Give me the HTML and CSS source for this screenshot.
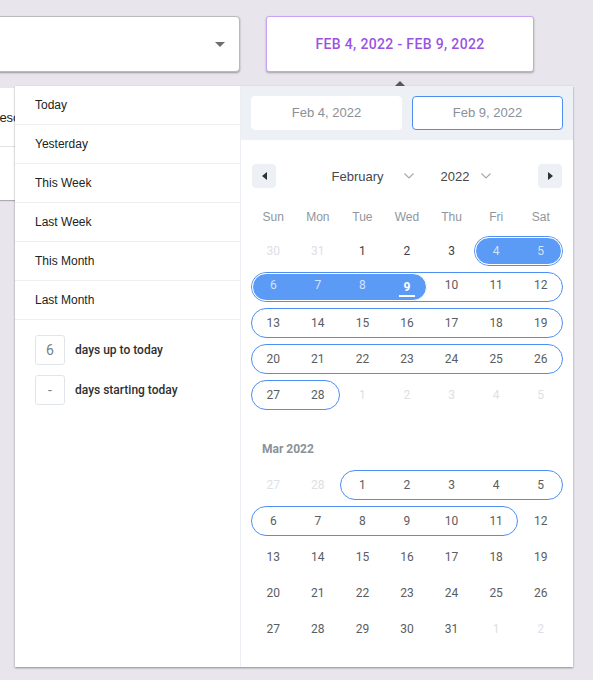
FILE: index.html
```html
<!DOCTYPE html>
<html>
<head>
<meta charset="utf-8">
<link rel="stylesheet" href="styles.css">
</head>
<body>
<div class="topbar">
  <div class="select"><span class="caret"></span></div>
  <button class="range-btn">FEB 4, 2022 - FEB 9, 2022</button>
</div>
<div class="card">
  <div class="card-row">Desc</div>
  <div class="card-row2"></div>
</div>
<div class="popup">
  <span class="popup-arrow"></span>
  <div class="presets">
    <div class="preset">Today</div>
    <div class="preset">Yesterday</div>
    <div class="preset">This Week</div>
    <div class="preset">Last Week</div>
    <div class="preset">This Month</div>
    <div class="preset">Last Month</div>
    <div class="custom">
      <div class="custom-row"><span class="num-box">6</span><span class="custom-label">days up to today</span></div>
      <div class="custom-row"><span class="num-box">-</span><span class="custom-label">days starting today</span></div>
    </div>
  </div>
  <div class="pane">
    <div class="inputs">
      <div class="date-input">Feb 4, 2022</div>
      <div class="date-input active">Feb 9, 2022</div>
    </div>
    <div class="cal">
      <div class="cal-head">
        <span class="nav-btn"><span class="tri-left"></span></span>
        <div class="cal-title">
          <span class="sel-month">February<svg class="chev" width="10" height="6" viewBox="0 0 10 6"><path d="M0.5 0.5 L5 5 L9.5 0.5" fill="none" stroke="#a3a8ad" stroke-width="1.1"/></svg></span>
          <span class="sel-year">2022<svg class="chev" width="10" height="6" viewBox="0 0 10 6"><path d="M0.5 0.5 L5 5 L9.5 0.5" fill="none" stroke="#a3a8ad" stroke-width="1.1"/></svg></span>
        </div>
        <span class="nav-btn"><span class="tri-right"></span></span>
      </div>
      <div class="weekdays"><span>Sun</span><span>Mon</span><span>Tue</span><span>Wed</span><span>Thu</span><span>Fri</span><span>Sat</span></div>

      <div class="week">
        <span class="ring c6-8"></span><span class="fill c6-8 f-both"></span>
        <div class="days"><span class="off">30</span><span class="off">31</span><span class="dk">1</span><span class="dk">2</span><span class="dk">3</span><span class="in">4</span><span class="in">5</span></div>
      </div>
      <div class="week">
        <span class="ring c1-8"></span><span class="fill c1-5 f-left"></span>
        <div class="days"><span class="in">6</span><span class="in">7</span><span class="in">8</span><span><b class="cur">9</b></span><span>10</span><span>11</span><span>12</span></div>
      </div>
      <div class="week">
        <span class="ring c1-8"></span>
        <div class="days"><span>13</span><span>14</span><span>15</span><span>16</span><span>17</span><span>18</span><span>19</span></div>
      </div>
      <div class="week">
        <span class="ring c1-8"></span>
        <div class="days"><span>20</span><span>21</span><span>22</span><span>23</span><span>24</span><span>25</span><span>26</span></div>
      </div>
      <div class="week">
        <span class="ring c1-3"></span>
        <div class="days"><span>27</span><span>28</span><span class="off">1</span><span class="off">2</span><span class="off">3</span><span class="off">4</span><span class="off">5</span></div>
      </div>

      <div class="month-label">Mar 2022</div>

      <div class="week">
        <span class="ring c3-8"></span>
        <div class="days"><span class="off">27</span><span class="off">28</span><span>1</span><span>2</span><span>3</span><span>4</span><span>5</span></div>
      </div>
      <div class="week">
        <span class="ring c1-7"></span>
        <div class="days"><span>6</span><span>7</span><span>8</span><span>9</span><span>10</span><span>11</span><span>12</span></div>
      </div>
      <div class="week">
        <div class="days"><span>13</span><span>14</span><span>15</span><span>16</span><span>17</span><span>18</span><span>19</span></div>
      </div>
      <div class="week">
        <div class="days"><span>20</span><span>21</span><span>22</span><span>23</span><span>24</span><span>25</span><span>26</span></div>
      </div>
      <div class="week">
        <div class="days"><span>27</span><span>28</span><span>29</span><span>30</span><span>31</span><span class="off">1</span><span class="off">2</span></div>
      </div>
    </div>
  </div>
</div>
</body>
</html>
```
FILE: styles.css
```css
* { box-sizing: border-box; }
html, body { margin: 0; padding: 0; }
body {
  background: #e8e6ec;
  width: 593px;
  height: 680px;
  overflow: hidden;
  font-family: "Liberation Sans", Arial, sans-serif;
  position: relative;
}

.topbar {
  display: flex;
  padding-top: 16px;
  height: 72px;
}
.select {
  margin-left: -20px;
  width: 260px;
  height: 56px;
  background: #fff;
  border: 1px solid #b9b9bd;
  border-radius: 4px;
  box-shadow: 0 1px 2px rgba(0,0,0,0.35);
  display: flex;
  align-items: center;
  justify-content: flex-end;
  padding-right: 14px;
}
.caret {
  width: 0; height: 0;
  border-left: 5px solid transparent;
  border-right: 5px solid transparent;
  border-top: 5px solid #6e6e72;
  margin-top: 1px;
}
.range-btn {
  margin-left: 26px;
  width: 268px;
  height: 56px;
  background: #fff;
  border: 1px solid #c8a3f3;
  border-radius: 3px;
  box-shadow: 0 1px 2px rgba(0,0,0,0.3);
  font-family: Roboto, "Liberation Sans", sans-serif;
  font-weight: 500;
  font-size: 14px;
  letter-spacing: 0.35px;
  color: #9b52e3;
  padding: 0;
}

.card {
  margin-top: 16px;
  margin-left: -30px;
  width: 300px;
  background: #fff;
  box-shadow: 0 1px 1px rgba(0,0,0,0.25);
}
.card-row {
  height: 59px;
  padding-left: 20px;
  line-height: 59px;
  font-size: 13px;
  color: #222;
  border-bottom: 1px solid #e2e2e6;
}
.card-row2 { height: 53px; }

.popup {
  position: absolute;
  left: 15px;
  top: 86px;
  width: 558px;
  display: flex;
  background: #fff;
  box-shadow: 0 1px 2px rgba(0,0,0,0.4);
}
.popup-arrow {
  position: absolute;
  top: -5px;
  left: 380px;
  width: 0; height: 0;
  border-left: 5px solid transparent;
  border-right: 5px solid transparent;
  border-bottom: 5px solid #55575b;
}

.presets {
  width: 226px;
  border-right: 1px solid #eceef3;
}
.preset {
  height: 39px;
  line-height: 38px;
  padding-left: 20px;
  border-bottom: 1px solid #eceef2;
  font-size: 12px;
  color: #222;
}
.custom {
  padding: 15px 20px;
  display: flex;
  flex-direction: column;
  gap: 10px;
}
.custom-row {
  display: flex;
  align-items: center;
}
.num-box {
  width: 30px;
  height: 30px;
  border: 1px solid #dfe5eb;
  border-radius: 3px;
  display: flex;
  align-items: center;
  justify-content: center;
  font-family: Roboto, sans-serif;
  font-size: 14px;
  color: #7a7f85;
}
.custom-label {
  margin-left: 10px;
  font-family: Roboto, sans-serif;
  font-weight: 500;
  font-size: 12px;
  color: #2e2f32;
}

.pane {
  width: 332px;
}
.inputs {
  background: #edf0f5;
  padding: 10px;
  display: flex;
  gap: 10px;
}
.date-input {
  flex: 1;
  height: 34px;
  background: #fff;
  border: 1px solid #fff;
  border-radius: 4px;
  text-align: center;
  line-height: 32px;
  font-size: 13px;
  color: #8a9097;
}
.date-input.active {
  border-color: #4d8ff0;
}

.cal {
  padding: 24px 10px 20px;
}
.cal-head {
  display: flex;
  align-items: center;
  height: 24px;
}
.nav-btn {
  width: 24px;
  height: 24px;
  margin: 0 1px;
  background: #edf0f5;
  border-radius: 4px;
  display: flex;
  align-items: center;
  justify-content: center;
}
.tri-left {
  width: 0; height: 0;
  border-top: 4px solid transparent;
  border-bottom: 4px solid transparent;
  border-right: 5px solid #2f3135;
}
.tri-right {
  width: 0; height: 0;
  border-top: 4px solid transparent;
  border-bottom: 4px solid transparent;
  border-left: 5px solid #2f3135;
}
.cal-title {
  flex: 1;
  display: flex;
  justify-content: center;
  gap: 27px;
  padding-left: 9px;
  font-size: 13px;
  color: #45484d;
}
.sel-month, .sel-year {
  display: flex;
  align-items: center;
}
.sel-month .chev { margin-left: 20px; }
.sel-year .chev { margin-left: 12px; }

.weekdays {
  margin-top: 13px;
  height: 32px;
  display: grid;
  grid-template-columns: repeat(7, 1fr);
  align-items: center;
  text-align: center;
  font-size: 12px;
  color: #90969c;
}

.week {
  display: grid;
  grid-template-columns: repeat(7, 1fr);
  height: 36px;
  align-items: center;
}
.ring {
  grid-row: 1;
  height: 30px;
  border: 1px solid #4f8ef2;
  border-radius: 15px;
}
.fill {
  grid-row: 1;
  height: 28px;
  border: 1px solid #fff;
  border-radius: 14px;
  background: #5b9af5;
}
.f-both { margin: 0 1px; }
.f-left { margin: 0 2px 0 1px; }
.c1-8 { grid-column: 1 / 8; }
.c1-7 { grid-column: 1 / 7; }
.c1-5 { grid-column: 1 / 5; }
.c1-3 { grid-column: 1 / 3; }
.c3-8 { grid-column: 3 / 8; }
.c6-8 { grid-column: 6 / 8; }

.days {
  grid-row: 1;
  grid-column: 1 / 8;
  display: grid;
  grid-template-columns: repeat(7, 1fr);
  text-align: center;
  font-family: Roboto, sans-serif;
  font-size: 12px;
  color: #5a5d61;
}
.days .off { color: #dde0e4; }
.days .dk { color: #3d4044; }
.days .in { color: #d3e3fc; }
.cur {
  display: inline-block;
  color: #fff;
  font-weight: 700;
  line-height: 14px;
  padding: 0 5px 1px;
  border-bottom: 2px solid #fff;
  margin-top: 2px;
}

.month-label {
  padding: 27px 0 9px 11px;
  line-height: 18px;
  font-family: Roboto, sans-serif;
  font-weight: 700;
  font-size: 12px;
  color: #8a929a;
}
```
